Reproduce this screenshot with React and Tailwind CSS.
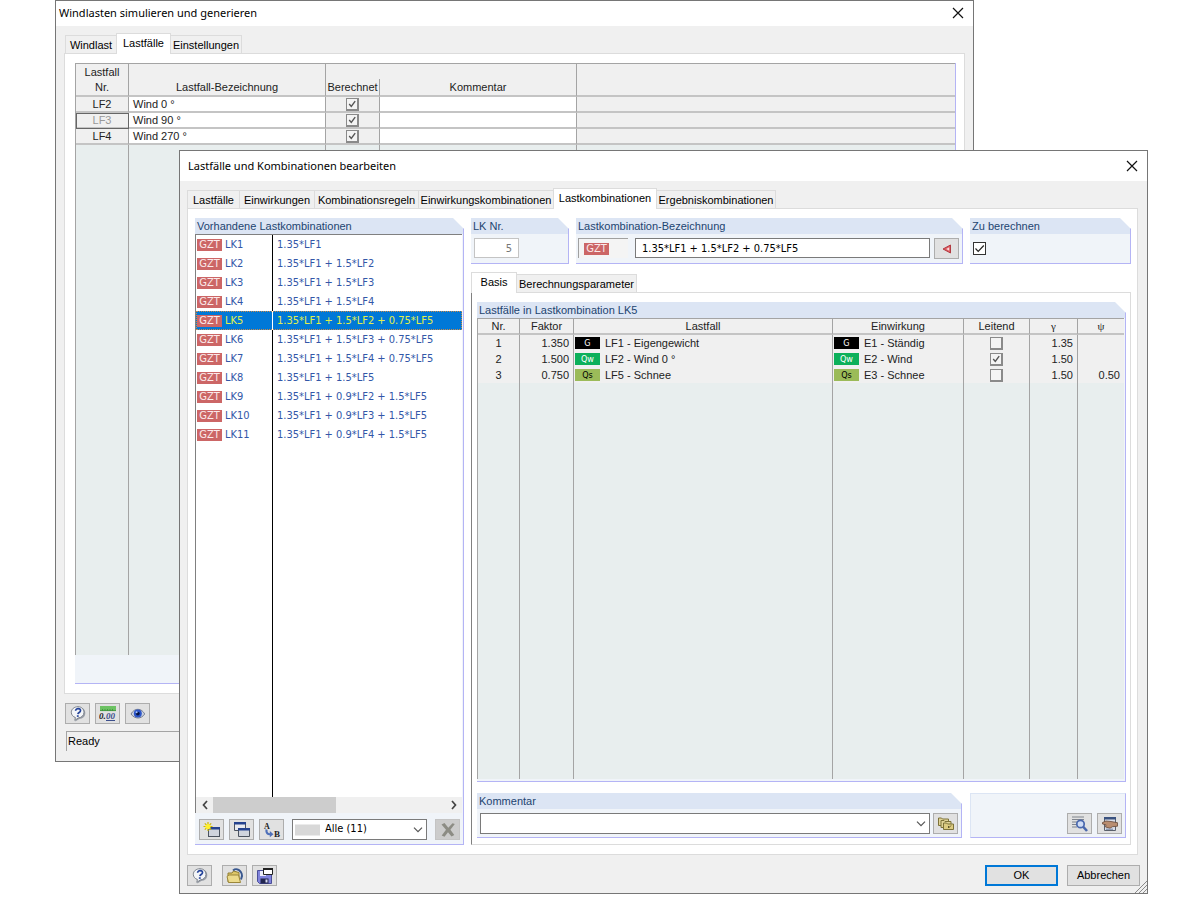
import React, { useState } from "react";

const SANS = "font-['Liberation_Sans',Arial,sans-serif]";
const WIDE = "font-['DejaVu_Sans_Condensed','DejaVu_Sans',sans-serif]";
const TITLE = "font-['Noto_Sans','Open_Sans',sans-serif]";

const combinations = [
  ["LK1", "1.35*LF1"],
  ["LK2", "1.35*LF1 + 1.5*LF2"],
  ["LK3", "1.35*LF1 + 1.5*LF3"],
  ["LK4", "1.35*LF1 + 1.5*LF4"],
  ["LK5", "1.35*LF1 + 1.5*LF2 + 0.75*LF5"],
  ["LK6", "1.35*LF1 + 1.5*LF3 + 0.75*LF5"],
  ["LK7", "1.35*LF1 + 1.5*LF4 + 0.75*LF5"],
  ["LK8", "1.35*LF1 + 1.5*LF5"],
  ["LK9", "1.35*LF1 + 0.9*LF2 + 1.5*LF5"],
  ["LK10", "1.35*LF1 + 0.9*LF3 + 1.5*LF5"],
  ["LK11", "1.35*LF1 + 0.9*LF4 + 1.5*LF5"],
];

const loadCases = [
  { nr: 1, factor: "1.350", tag: "G", name: "LF1 - Eigengewicht", action: "E1 - Ständig", leading: false, gamma: "1.35", psi: "" },
  { nr: 2, factor: "1.500", tag: "Qw", name: "LF2 - Wind 0 °", action: "E2 - Wind", leading: true, gamma: "1.50", psi: "" },
  { nr: 3, factor: "0.750", tag: "Qs", name: "LF5 - Schnee", action: "E3 - Schnee", leading: false, gamma: "1.50", psi: "0.50" },
];

const windCases = [
  { id: "LF2", name: "Wind 0 °" },
  { id: "LF3", name: "Wind 90 °" },
  { id: "LF4", name: "Wind 270 °" },
];

const tagStyles = {
  G: "bg-black text-white",
  Qw: "bg-[#0cb05a] text-white",
  Qs: "bg-[#9bbb59] text-black",
};

function Tag({ kind }) {
  return (
    <span className={`inline-block h-3 w-[25px] shrink-0 text-center text-[9px] leading-3 ${WIDE} ${tagStyles[kind]}`}>
      {kind}
    </span>
  );
}

function Gzt() {
  return (
    <span className={`inline-block h-3 w-[25px] shrink-0 bg-[#cc6666] text-center text-[11px] leading-3 text-[#fbeaea] ${WIDE}`}>
      GZT
    </span>
  );
}

function Check({ label, checked, strong }) {
  const [on, setOn] = useState(checked);
  return (
    <span className="relative inline-block size-[13px] align-middle">
      <input
        type="checkbox"
        aria-label={label}
        checked={on}
        onChange={() => setOn(!on)}
        className={`block size-[13px] appearance-none border ${strong ? "border-[#333] bg-white" : "border-r-2 border-b-2 border-[#8a8a8a] bg-[#f4f4f4]"}`}
      />
      {on && (
        <svg viewBox="0 0 13 13" className="pointer-events-none absolute inset-0 size-[13px]">
          <path
            d={strong ? "M2.5 6.5 5.2 9.3 10.8 3.5" : "M3.2 6 5.3 8.4 9.2 3.2"}
            fill="none"
            stroke={strong ? "#222" : "#555"}
            strokeWidth={strong ? 1.2 : 1.4}
          />
        </svg>
      )}
    </span>
  );
}

function Window({ title, className, children }) {
  return (
    <section aria-label={title} className={`absolute flex flex-col border border-[#767676] bg-[#f0f0f0] ${className}`}>
      {children}
    </section>
  );
}

function TitleBar({ title, className }) {
  return (
    <header className={`flex shrink-0 items-center justify-between bg-white ${className}`}>
      <h1 className={`text-[11px] leading-4 text-black ${TITLE}`}>{title}</h1>
      <button type="button" aria-label="Schließen" className="grid size-4 place-items-center">
        <svg viewBox="0 0 12 12" className="size-3">
          <path d="M1 1 11 11M11 1 1 11" stroke="#111" strokeWidth="1.2" fill="none" />
        </svg>
      </button>
    </header>
  );
}

function Tabs({ tabs, active }) {
  return (
    <div role="tablist" className="relative z-10 -mb-px flex shrink-0 items-end text-[11px] leading-4 text-black">
      {tabs.map(([name, width]) =>
        name === active ? (
          <button key={name} type="button" role="tab" aria-selected="true" className={`-ml-px h-[21px] border border-b-0 border-[#dcdcdc] bg-white pb-0.5 text-center whitespace-nowrap ${width}`}>
            {name}
          </button>
        ) : (
          <button key={name} type="button" role="tab" aria-selected="false" className={`-ml-px h-[19px] border border-[#dcdcdc] bg-[#f0f0f0] text-center whitespace-nowrap ${width}`}>
            {name}
          </button>
        )
      )}
    </div>
  );
}

function Group({ title, className = "", bodyClass = "", children }) {
  return (
    <section aria-label={title} className={`flex flex-col ${className}`}>
      <h2 className="h-4 shrink-0 border-r border-[#b4b4f5] bg-[#dce5f4] pl-0.5 text-[11px] leading-4 whitespace-nowrap text-[#1d4470] [clip-path:polygon(0_0,calc(100%-11px)_0,100%_11px,100%_100%,0_100%)]">
        {title}
      </h2>
      <div className={`min-h-0 flex-1 border-r border-b border-[#b4b4f5] bg-[#f0f4f9] ${bodyClass}`}>{children}</div>
    </section>
  );
}

function IconButton({ label, disabled, children }) {
  return (
    <button
      type="button"
      aria-label={label}
      disabled={disabled}
      className={`grid h-[21px] w-[25px] shrink-0 place-items-center border ${disabled ? "border-[#c4c4c4] bg-[#cccccc]" : "border-[#adadad] bg-[#e1e1e1]"}`}
    >
      {children}
    </button>
  );
}

function Icon({ children }) {
  return (
    <svg viewBox="0 0 16 16" className="size-4" fill="none">
      {children}
    </svg>
  );
}

const HelpIcon = () => (
  <Icon>
    <path d="M9 1.200c3.800 0 6.300 2.400 6.300 5.800 0 3.500-2.600 5.900-6 6l-4 2.600.5-3.300C4 11.300 2.500 9.300 2.500 6.900 2.500 3.600 5.200 1.200 9 1.200Z" fill="#9a9fa8" />
    <path d="M8 .7c3.600 0 6 2.500 6 5.600s-2.500 5.500-5.700 5.600l-3.500 2.500.6-2.900C3.100 10.700 1.300 9 1.300 6.300 1.300 3.200 4.200.7 8 .7Z" fill="#f3f5f8" stroke="#7d838c" strokeWidth="1" />
    <path d="M5.600 4.700C5.700 3.300 7 2.500 8.300 2.600c1.400.1 2.300.9 2.200 2.100-.1 1.600-2.400 1.900-2.600 3.400" stroke="#24439a" strokeWidth="1.700" />
    <path d="m7.800 9.300-.1 1.600" stroke="#24439a" strokeWidth="1.800" />
  </Icon>
);

const DecimalsIcon = () => (
  <svg viewBox="0 0 18 16" className="h-4 w-[18px]">
    <rect x="1" y="0" width="16" height="5" fill="#6cc263" />
    <path d="M1 4.600h16M3.500 3v2M6 3v2M8.500 3v2M11 3v2M13.500 3v2" stroke="#3d8f3b" strokeWidth=".8" />
    <text x="0" y="13" fontSize="9" fontStyle="italic" fontWeight="bold" fontFamily="Liberation Serif, serif" fill="#222">0.</text>
    <text x="7" y="13" fontSize="9" fontStyle="italic" fontWeight="bold" fontFamily="Liberation Serif, serif" fill="#3c4f8c">00</text>
    <path d="M7 14.500h9" stroke="#3c4f8c" strokeWidth="1" />
  </svg>
);

const EyeIcon = () => (
  <Icon>
    <path d="M1 8C3 4.500 5.600 3.200 8 3.300c2.900.1 5.200 1.900 6.700 4.700-1.800 2.600-4 4-6.600 4C5.300 12 2.800 10.600 1 8Z" fill="#cdd3df" stroke="#777f91" />
    <circle cx="7.800" cy="7.600" r="4" fill="#2c55c8" />
    <circle cx="7.800" cy="7.600" r="1.900" fill="#071443" />
    <circle cx="6.600" cy="6.200" r="1" fill="#a9c6ff" />
  </Icon>
);

const NewIcon = () => (
  <svg viewBox="0 0 18 16" className="h-4 w-[18px]">
    <rect x="5.500" y="5.500" width="11" height="9" fill="#d0d4dd" stroke="#4c535f" />
    <rect x="5" y="5" width="12" height="2.500" fill="#25438f" />
    <path d="M5 0v9M.5 4.500h9M1.800 1.300l6.400 6.400M8.200 1.300 1.800 7.700" stroke="#cdb800" strokeWidth="1.200" />
    <circle cx="5" cy="4.500" r="2.600" fill="#fff02e" />
  </svg>
);

const CopyIcon = () => (
  <svg viewBox="0 0 18 16" className="h-4 w-[18px]">
    <path d="M1.500.5h11v8h-11Z" fill="#e8eaf0" stroke="#4c535f" />
    <path d="M1 0h12v2.500H1Z" fill="#25438f" />
    <path d="M5.500 6.500h11v8h-11Z" fill="#d0d4dd" stroke="#4c535f" />
    <path d="M5 6h12v2.500H5Z" fill="#25438f" />
  </svg>
);

const RenameIcon = () => (
  <svg viewBox="0 0 18 16" className="h-4 w-[18px]">
    <text x="1" y="6.500" fontSize="8" fontWeight="bold" fontFamily="Liberation Serif, serif" fill="#222">A</text>
    <path d="M3.500 7.500c-.5 3.500 1.200 5 4 4.700" fill="none" stroke="#4f70b9" strokeWidth="2.200" />
    <path d="m6.800 9 3.700 3.200-3.700 3Z" fill="#4f70b9" />
    <text x="11" y="15" fontSize="9" fontWeight="bold" fontFamily="Liberation Serif, serif" fill="#222">B</text>
  </svg>
);

const DeleteIcon = () => (
  <Icon>
    <path d="M1.500 2.500 4.500 1 8.300 5.800 12.500 1.200l2.300.8-4.400 5.800L14.300 13l-2.800 1.500L8 10.200 4.500 14.800 1.700 13.500 6 7.800Z" fill="#8c8c84" />
  </Icon>
);

const OpenIcon = () => (
  <svg viewBox="0 0 18 16" className="h-4 w-[18px]">
    <path d="M7 2.500C10.500-.3 15.500 2 16 8l-1 3.500" fill="none" stroke="#39588f" strokeWidth="2" />
    <path d="M9 2.800c3 0 5 2 5.500 5" fill="none" stroke="#dfe8f7" strokeWidth="1" />
    <path d="M2 5h4l1.500-2L13 4.500V14H2Z" fill="#dcc667" stroke="#8f7c32" />
    <path d="M1 8.500 3 7h9.500l2 7.500H2.500Z" fill="#ecdb8c" stroke="#9b873a" />
  </svg>
);

const SaveIcon = () => (
  <Icon>
    <path d="M.5 2.500h14v13H2.500l-2-2Z" fill="#8083dc" stroke="#4a4e99" />
    <path d="M3 3h6v5H3Z" fill="#eceefb" />
    <path d="M3.500 10.500h8v5h-8Z" fill="#22264f" />
    <path d="M8.500 11.500h2v3h-2Z" fill="#d8dbf3" />
    <path d="M6.500.5h9v6h-9Z" fill="#fff" stroke="#222" />
    <path d="M6 0h10v2H6Z" fill="#222" />
  </Icon>
);

const TriangleIcon = () => (
  <Icon>
    <path d="M11.500 4v8L4 8Z" fill="#df5a60" stroke="#b23b42" />
    <path d="M10.200 6.300v3.400L7.200 8Z" fill="#f7dada" />
  </Icon>
);

const LibraryIcon = () => (
  <svg viewBox="0 0 18 16" className="h-4 w-[18px]">
    <path d="M1.500 9.500V2h3l1 1h6v6.500Z" fill="#e0d396" stroke="#7d7238" />
    <path d="M4 11.500v-7h3l1 1h6v6Z" fill="#e0d396" stroke="#7d7238" />
    <path d="M6.500 13.500V7h3l1 1h6v5.500Z" fill="#dccb80" stroke="#7d7238" />
    <path d="m14 9.500-2.500 2.500M11.500 12v-2" stroke="#5e5528" />
  </svg>
);

const FindIcon = () => (
  <svg viewBox="0 0 18 16" className="h-4 w-[18px]">
    <path d="M1 1h12M1 3.500h12M1 6h6M1 8.500h5M1 11h5" stroke="#80858e" strokeWidth="1.200" />
    <circle cx="9.500" cy="8" r="3.700" fill="#cfdcf6" stroke="#4a68ad" strokeWidth="1.700" />
    <path d="m12 10.500 4 4.500" stroke="#4a68ad" strokeWidth="2.600" />
  </svg>
);

const SettingsIcon = () => (
  <svg viewBox="0 0 18 16" className="h-4 w-[18px]">
    <path d="M3.500 1.500h11v13h-11Z" fill="#d9deea" stroke="#5a606b" />
    <path d="M3 1h12v2.500H3Z" fill="#3a527f" />
    <path d="M1.500 6.500 5 5l5 .5 6.500 1.200v3.500l-5 .5-2.500 1.500-4.500-1.200L5 8.800 1.500 8Z" fill="#b98d70" stroke="#66493a" strokeWidth=".8" />
    <path d="M5 13.200h7" stroke="#70819f" />
  </svg>
);

const Chevron = () => (
  <svg viewBox="0 0 10 6" className="pointer-events-none absolute top-1/2 right-1 h-1.5 w-2.5 -translate-y-1/2">
    <path d="M1 .7 5 4.700 9 .7" fill="none" stroke="#555" strokeWidth="1.200" />
  </svg>
);

function WindWindow() {
  const line = "border-r border-r-[#a4a4a4]";
  const bottom = "border-b-2 border-b-[#c4c4c4]";
  const cell = `${line} ${bottom} p-0`;
  const filler = `${line} bg-[#e8eeee]`;
  return (
    <Window title="Windlasten simulieren und generieren" className="top-0 right-[226px] bottom-[138px] left-[55px]">
      <TitleBar title="Windlasten simulieren und generieren" className="h-[25px] pr-[7px] pb-px pl-[3px]" />
      <div className="flex min-h-0 flex-1 flex-col px-2 pt-[7px] pb-[10px]">
        <div className="flex pl-0.5">
          <Tabs active="Lastfälle" tabs={[["Windlast", "w-[52px]"], ["Lastfälle", "w-[55px]"], ["Einstellungen", "w-[72px]"]]} />
        </div>
        <div className="flex min-h-0 flex-1 flex-col border border-[#dcdcdc] bg-white pt-[9px] pr-2 pb-[9px] pl-2.5">
          <div className="flex min-h-0 flex-1 flex-col border-r border-b border-[#b4b4f5] bg-[#f0f4f9]">
            <div className="min-h-0 flex-1">
              <table className="h-full w-full table-fixed border-separate border-spacing-0 border-t border-l border-[#a4a4a4] text-[11px] leading-[14px] text-[#222]">
                <colgroup>
                  <col className="w-[53px]" />
                  <col className="w-[197px]" />
                  <col className="w-[54px]" />
                  <col className="w-[197px]" />
                  <col />
                </colgroup>
                <thead className="bg-[#f0f0f0]">
                  <tr className="h-[15px]">
                    <th className={`${line} p-0 font-normal`}>Lastfall</th>
                    <th className={`${line} p-0`} />
                    <th colSpan={2} className={`${line} p-0`} />
                    <th className="p-0" />
                  </tr>
                  <tr className="h-[18px]">
                    {["Nr.", "Lastfall-Bezeichnung", "Berechnet", "Kommentar"].map((name) => (
                      <th key={name} className={`${cell} font-normal`}>{name}</th>
                    ))}
                    <th className={`${bottom} p-0`} />
                  </tr>
                </thead>
                <tbody>
                  {windCases.map((row) => (
                    <tr key={row.id} className="h-4">
                      <td className={`${cell} bg-[#f0f0f0] text-center ${row.id === "LF3" ? "text-[#999] outline-1 -outline-offset-1 outline-[#666]" : ""}`}>{row.id}</td>
                      <td className={`${cell} bg-white pl-1`}>{row.name}</td>
                      <td className={`${cell} bg-[#f0f0f0] text-center leading-none`}><Check label={`${row.id} berechnet`} checked /></td>
                      <td className={`${cell} bg-white`} />
                      <td className={`${bottom} bg-[#f0f0f0] p-0`} />
                    </tr>
                  ))}
                  <tr>
                    <td className={filler} />
                    <td className={filler} />
                    <td className={filler} />
                    <td className={filler} />
                    <td className="bg-[#e8eeee]" />
                  </tr>
                </tbody>
              </table>
            </div>
            <div className="h-7 shrink-0" />
          </div>
        </div>
        <div className="flex gap-[5px] pt-[9px] pb-[7px] pl-px">
          <IconButton label="Hilfe"><HelpIcon /></IconButton>
          <IconButton label="Dezimalstellen"><DecimalsIcon /></IconButton>
          <IconButton label="Ansicht"><EyeIcon /></IconButton>
        </div>
        <div role="status" className="ml-0.5 h-5 border-t border-l border-[#a4a4a4] pl-px text-[11px] leading-[18px] text-black">Ready</div>
      </div>
    </Window>
  );
}

function CombinationList() {
  const [selected, setSelected] = useState("LK5");
  return (
    <Group title="Vorhandene Lastkombinationen" className="w-[269px] shrink-0" bodyClass="flex flex-col">
      <div className={`mr-px flex min-h-0 flex-1 flex-col border-t border-l border-[#808080] bg-white text-[11px] ${WIDE}`}>
        {combinations.map(([id, formula]) => {
          const on = id === selected;
          return (
            <button
              key={id}
              type="button"
              aria-pressed={on}
              onClick={() => setSelected(id)}
              className={`grid h-[19px] shrink-0 grid-cols-[77px_1fr] text-left leading-[17px] ${on ? "bg-[#0078d7] text-[#e3f04a] outline-1 -outline-offset-1 outline-dotted outline-[#c98a4a]" : "text-[#3357a8]"}`}
            >
              <span className={`flex h-full items-center gap-[3px] border-r pl-px ${on ? "border-white" : "border-black"}`}>
                <Gzt />
                {id}
              </span>
              <span className="flex items-center pl-1">{formula}</span>
            </button>
          );
        })}
        <div className="grid flex-1 grid-cols-[77px_1fr]">
          <div className="border-r border-black" />
        </div>
        <div className="flex h-4 shrink-0 items-stretch bg-[#f0f0f0]">
          <button type="button" aria-label="Nach links" className="grid w-[17px] place-items-center">
            <svg viewBox="0 0 6 10" className="h-2.5 w-1.5"><path d="M5 1 1.500 5 5 9" fill="none" stroke="#444" strokeWidth="1.700" /></svg>
          </button>
          <div className="w-[123px] bg-[#cdcdcd]" />
          <button type="button" aria-label="Nach rechts" className="ml-auto grid w-[17px] place-items-center">
            <svg viewBox="0 0 6 10" className="h-2.5 w-1.5"><path d="M1 1 4.500 5 1 9" fill="none" stroke="#444" strokeWidth="1.700" /></svg>
          </button>
        </div>
      </div>
      <div className="flex shrink-0 items-center gap-[5px] pt-1.5 pb-1 pr-[3px] pl-1">
        <IconButton label="Neue Lastkombination"><NewIcon /></IconButton>
        <IconButton label="Kopieren"><CopyIcon /></IconButton>
        <IconButton label="Umnummerieren"><RenameIcon /></IconButton>
        <span className="relative mx-[3px] min-w-0 flex-1">
          <span className="pointer-events-none absolute top-1/2 left-[3px] h-[11px] w-[25px] -translate-y-1/2 bg-[#d8d8d8]" />
          <select aria-label="Filter" className={`block h-[21px] w-full appearance-none border border-[#7a7a7a] bg-white pl-8 text-[11px] text-black ${WIDE}`}>
            <option>Alle (11)</option>
          </select>
          <Chevron />
        </span>
        <IconButton label="Löschen" disabled><DeleteIcon /></IconButton>
      </div>
    </Group>
  );
}

function LoadCaseTable() {
  const line = "border-r border-r-[#a4a4a4]";
  const bottom = "border-b-2 border-b-[#c4c4c4]";
  const head = `${line} ${bottom} p-0 font-normal`;
  const cell = `${line} p-0`;
  const filler = `${line} bg-[#e8eeee]`;
  return (
    <table className="h-full w-full table-fixed border-separate border-spacing-0 border-t border-l border-[#a4a4a4] text-[11px] leading-4 text-[#222]">
      <colgroup>
        <col className="w-[42px]" />
        <col className="w-[54px]" />
        <col />
        <col className="w-[131px]" />
        <col className="w-[66px]" />
        <col className="w-12" />
        <col className="w-[46px]" />
      </colgroup>
      <thead className="bg-[#f0f0f0] leading-[14px]">
        <tr className="h-4">
          {["Nr.", "Faktor", "Lastfall", "Einwirkung", "Leitend"].map((name) => (
            <th key={name} className={head}>{name}</th>
          ))}
          <th className={`${head} font-['Liberation_Serif',serif]`}>γ</th>
          <th className={`${bottom} p-0 font-['Liberation_Serif',serif] font-normal`}>ψ</th>
        </tr>
      </thead>
      <tbody className="bg-[#f0f0f0]">
        {loadCases.map((row) => (
          <tr key={row.nr} className="h-4">
            <td className={`${cell} text-center`}>{row.nr}</td>
            <td className={`${cell} pr-1 text-right`}>{row.factor}</td>
            <td className={cell}>
              <span className="flex items-center gap-[5px] pl-px"><Tag kind={row.tag} />{row.name}</span>
            </td>
            <td className={cell}>
              <span className="flex items-center gap-[5px] pl-px"><Tag kind={row.tag} />{row.action}</span>
            </td>
            <td className={`${cell} text-center leading-none`}><Check label={`Leitend ${row.nr}`} checked={row.leading} /></td>
            <td className={`${cell} pr-1 text-right`}>{row.gamma}</td>
            <td className="p-0 pr-1 text-right">{row.psi}</td>
          </tr>
        ))}
        <tr>
          {[0, 1, 2, 3, 4, 5].map((i) => (
            <td key={i} className={filler} />
          ))}
          <td className="bg-[#e8eeee]" />
        </tr>
      </tbody>
    </table>
  );
}

function CombinationWindow() {
  return (
    <Window title="Lastfälle und Kombinationen bearbeiten" className="top-[150px] right-[52px] bottom-[6px] left-[179px]">
      <TitleBar title="Lastfälle und Kombinationen bearbeiten" className="h-[30px] pr-[7px] pl-2" />
      <div className="flex min-h-0 flex-1 flex-col px-[7px] pt-[7px] pb-[7px]">
        <div className="flex pl-px">
          <Tabs
            active="Lastkombinationen"
            tabs={[
              ["Lastfälle", "w-[53px]"],
              ["Einwirkungen", "w-[76px]"],
              ["Kombinationsregeln", "w-[105px]"],
              ["Einwirkungskombinationen", "w-[136px]"],
              ["Lastkombinationen", "w-[104px]"],
              ["Ergebniskombinationen", "w-[120px]"],
            ]}
          />
        </div>
        <div className="mr-0.5 flex min-h-0 flex-1 gap-[7px] border border-[#dcdcdc] bg-white pt-[9px] pr-1.5 pb-[9px] pl-[7px]">
          <CombinationList />
          <div className="flex min-w-0 flex-1 flex-col">
            <div className="flex h-[46px] shrink-0 gap-[7px]">
              <Group title="LK Nr." className="w-[98px] shrink-0" bodyClass="pt-1 pl-[3px]">
                <input aria-label="LK Nr." defaultValue="5" className={`block h-5 w-[45px] border border-[#c4c4c4] bg-white pr-1.5 text-right text-[11px] text-[#777] ${WIDE}`} />
              </Group>
              <Group title="Lastkombination-Bezeichnung" className="min-w-0 flex-1" bodyClass="flex items-start gap-1 pt-1 pr-[3px] pl-0.5">
                <div className="mr-[3px] flex h-5 w-[50px] shrink-0 items-center border-t border-l border-[#a0a0a0] bg-[#f4f4f4] pl-[5px]">
                  <Gzt />
                </div>
                <input aria-label="Bezeichnung" defaultValue="1.35*LF1 + 1.5*LF2 + 0.75*LF5" className={`block h-5 min-w-0 flex-1 border border-[#7a7a7a] bg-white px-1.5 text-[11px] text-black ${WIDE}`} />
                <IconButton label="Übernehmen"><TriangleIcon /></IconButton>
              </Group>
              <Group title="Zu berechnen" className="w-[161px] shrink-0" bodyClass="flex items-start pt-2 pl-[3px]">
                <Check label="Zu berechnen" checked strong />
              </Group>
            </div>
            <div className="flex pt-2 pl-px">
              <Tabs active="Basis" tabs={[["Basis", "w-[46px]"], ["Berechnungsparameter", "w-[121px]"]]} />
            </div>
            <div className="flex min-h-0 flex-1 flex-col gap-[11px] border border-l-[#808080] border-t-[#dcdcdc] border-r-[#dcdcdc] border-b-[#dcdcdc] pt-[9px] pr-1 pb-1.5 pl-[5px]">
              <Group title="Lastfälle in Lastkombination LK5" className="min-h-0 flex-1" bodyClass="pr-px pb-0.5">
                <LoadCaseTable />
              </Group>
              <div className="flex h-[45px] shrink-0 gap-2">
                <Group title="Kommentar" className="min-w-0 flex-1" bodyClass="flex items-start gap-[3px] pt-1 pr-[3px] pl-[3px]">
                  <span className="relative min-w-0 flex-1">
                    <select aria-label="Kommentar" className="block h-[21px] w-full appearance-none border border-[#7a7a7a] bg-white text-[11px]">
                      <option />
                    </select>
                    <Chevron />
                  </span>
                  <IconButton label="Kommentarbibliothek"><LibraryIcon /></IconButton>
                </Group>
                <div className="flex w-[156px] shrink-0 items-start justify-end gap-[5px] border border-t-[#dce5f4] border-r-[#b4b4f5] border-b-[#b4b4f5] border-l-[#dce5f4] bg-[#f0f4f9] pt-[19px] pr-[3px]">
                  <IconButton label="Details suchen"><FindIcon /></IconButton>
                  <IconButton label="Einstellungen"><SettingsIcon /></IconButton>
                </div>
              </div>
            </div>
          </div>
        </div>
        <div className="flex shrink-0 items-center pt-[10px]">
          <IconButton label="Hilfe"><HelpIcon /></IconButton>
          <div className="ml-[10px] flex flex-1 gap-[5px]">
            <IconButton label="Öffnen"><OpenIcon /></IconButton>
            <IconButton label="Speichern"><SaveIcon /></IconButton>
          </div>
          <div className="flex gap-[9px] text-[11px] text-black">
            <button type="button" className="h-[21px] w-[73px] border-2 border-[#0078d7] bg-[#e1e1e1]">OK</button>
            <button type="button" className="h-[21px] w-[73px] border border-[#adadad] bg-[#e1e1e1]">Abbrechen</button>
          </div>
        </div>
      </div>
      <svg viewBox="0 0 12 12" className="pointer-events-none absolute right-0 bottom-0 size-3">
        <path d="M0 12 12 0M4 12 12 4M8 12 12 8" stroke="#8a8a8a" strokeWidth="1" />
      </svg>
    </Window>
  );
}

export default function App() {
  return (
    <main className={`relative min-h-screen w-full overflow-hidden bg-white ${SANS}`}>
      <WindWindow />
      <CombinationWindow />
    </main>
  );
}
